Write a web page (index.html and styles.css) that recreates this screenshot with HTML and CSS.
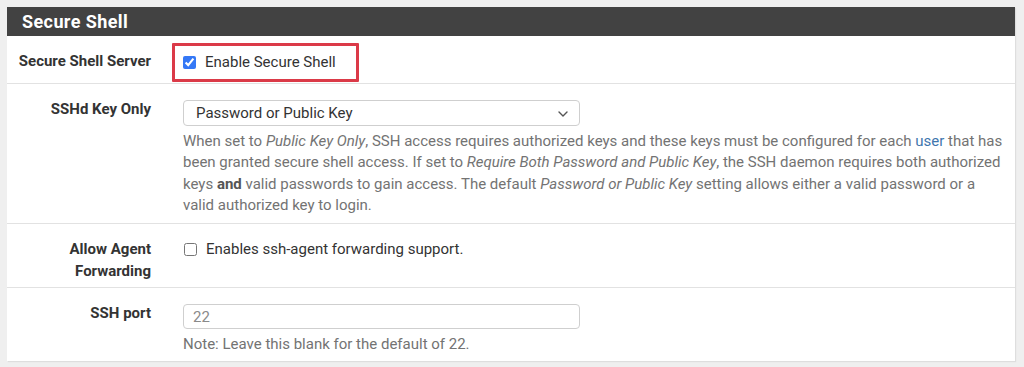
FILE: index.html
```html
<!DOCTYPE html>
<html>
<head>
<meta charset="utf-8">
<link rel="stylesheet" href="styles.css">
</head>
<body>
<div class="panel">
  <div class="panel-heading">Secure Shell</div>
  <div class="panel-body">
    <div class="row row-first">
      <div class="label">Secure Shell Server</div>
      <div class="content">
        <div class="highlight">
          <label class="check"><input type="checkbox" checked><span>Enable Secure Shell</span></label>
        </div>
      </div>
    </div>
    <div class="row row-key">
      <div class="label">SSHd Key Only</div>
      <div class="content">
        <div class="select">
          <span>Password or Public Key</span>
          <svg class="chev" width="10" height="6" viewBox="0 0 10 6"><path d="M1 1l4 4 4-4" fill="none" stroke="#555" stroke-width="1.4" stroke-linecap="round" stroke-linejoin="round"/></svg>
        </div>
        <p class="help">When set to <i>Public Key Only</i>, SSH access requires authorized keys and these keys must be configured for each <a href="#">user</a> that has been granted secure shell access. If set to <i>Require Both Password and Public Key</i>, the SSH daemon requires both authorized keys <b>and</b> valid passwords to gain access. The default <i>Password or Public Key</i> setting allows either a valid password or a valid authorized key to login.</p>
      </div>
    </div>
    <div class="row row-agent">
      <div class="label">Allow Agent<br>Forwarding</div>
      <div class="content">
        <label class="check"><input type="checkbox"><span>Enables ssh-agent forwarding support.</span></label>
      </div>
    </div>
    <div class="row row-port">
      <div class="label">SSH port</div>
      <div class="content">
        <input class="text" type="text" placeholder="22">
        <p class="help">Note: Leave this blank for the default of 22.</p>
      </div>
    </div>
  </div>
</div>
</body>
</html>
```
FILE: styles.css
```css
html, body {
  margin: 0;
  padding: 0;
}
body {
  background: #efefef;
  font-family: Roboto, "Liberation Sans", sans-serif;
  font-size: 15px;
  color: #333;
  padding: 7px 9px 0 7px;
  height: 367px;
  box-sizing: border-box;
  overflow: hidden;
}
.panel {
  background: #fff;
  width: 1008px;
  box-shadow: 1px 1px 1px #dedede;
}
.panel-heading {
  background: #424242;
  color: #fff;
  font-weight: 700;
  font-size: 18px;
  letter-spacing: 0.4px;
  height: 29px;
  line-height: 29px;
  padding-left: 15px;
}
.row {
  display: flex;
  border-top: 1px solid #e2e2e2;
  line-height: 21px;
}
.row-first {
  border-top: none;
  padding: 15px 0 11px;
}
.row-key { padding: 15px 0 7px; }
.row-agent { padding: 15px 0 5px; }
.row-port { padding: 15px 0 6px; }
.label {
  width: 144px;
  padding-right: 16px;
  text-align: right;
  font-weight: 700;
  flex: none;
}
.row-agent .label { line-height: 22px; margin-top: -1px; }
.content {
  flex: 1;
  padding-left: 16px;
  padding-right: 8px;
  position: relative;
}
.highlight {
  position: absolute;
  left: 5px;
  top: -8px;
  width: 181px;
  height: 33px;
  border: 3px solid #db3a48;
  border-radius: 1px;
}
.row-first .content { height: 21px; }
.check {
  display: flex;
  align-items: center;
  font-size: 15px;
  color: #333;
}
.highlight .check {
  position: absolute;
  left: 7px;
  top: 6px;
  white-space: nowrap;
}
.check input {
  width: 13px;
  height: 13px;
  margin: 0 9px 0 1px;
  accent-color: #3478f6;
}
.select {
  width: 372px;
  height: 24px;
  border: 1px solid #cfcfcf;
  border-radius: 4px;
  display: flex;
  align-items: center;
  justify-content: space-between;
  padding: 0 11px 0 12px;
  margin-top: 1px;
  font-size: 15px;
  color: #333;
}
.chev { margin-top: 1px; }
.help {
  margin: 5px 0 0;
  color: #737373;
  font-size: 15px;
  line-height: 21.3px;
}
.help a {
  color: #3f76ae;
  text-decoration: none;
}
.help b { color: #555; }
.text {
  display: block;
  box-sizing: border-box;
  width: 397px;
  height: 25px;
  border: 1px solid #cfcfcf;
  border-radius: 4px;
  padding: 0 9px;
  font-family: Roboto, "Liberation Sans", sans-serif;
  font-size: 15px;
  margin-top: 1px;
}
.text::placeholder { color: #8a8a8a; }
.row-port .help { margin-top: 5px; }
```
